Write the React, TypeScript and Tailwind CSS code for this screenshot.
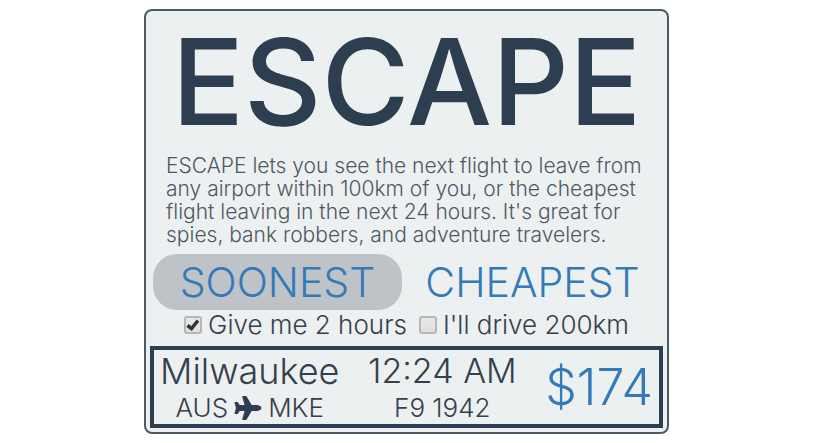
import { useState } from "react";
import { FaPlane } from "react-icons/fa";

const blurb = [
  "ESCAPE lets you see the next flight to leave from",
  "any airport within 100km of you, or the cheapest",
  "flight leaving in the next 24 hours. It's great for",
  "spies, bank robbers, and adventure travelers.",
];

function Option({ label, initial }: { label: string; initial: boolean }) {
  const [on, setOn] = useState(initial);
  return (
    <label className="flex items-center gap-1.5 whitespace-nowrap">
      <span className="grid">
        <input
          type="checkbox"
          checked={on}
          onChange={() => setOn(!on)}
          className="col-start-1 row-start-1 size-[18px] appearance-none rounded-[3px] border-2 border-[#b4b6b8] bg-linear-to-b from-[#e8e8e8] to-[#dedede]"
        />
        {on && (
          <svg viewBox="0 0 18 18" className="pointer-events-none col-start-1 row-start-1 size-[18px]" aria-hidden="true">
            <path d="M3.5 9.5 L7.5 12.5 L14 4.5" fill="none" stroke="#333" strokeWidth="3.5" />
          </svg>
        )}
      </span>
      {label}
    </label>
  );
}

export default function App() {
  return (
    <main className="min-h-screen bg-white px-4 py-[9px] font-['Inter',sans-serif] font-light text-[#34404c]">
      <section className="mx-auto w-full max-w-[525px] rounded-lg border-2 border-[#4d5963] bg-[#ecf0f1] p-1">
        <h1 className="text-center text-[120px] leading-[134px] font-medium text-[#2c3e50]">ESCAPE</h1>
        <p className="px-4 pt-[5px] text-[21px] leading-[23px] text-[#4d5963]">
          {blurb.map((line) => (
            <span key={line} className="block whitespace-nowrap">{line}</span>
          ))}
        </p>
        <div className="flex pt-2 text-[41px] leading-[56px] text-[#337ab7]">
          <button className="ml-[3px] w-[249px] rounded-3xl bg-[#bdc3c7]">SOONEST</button>
          <button className="flex-1">CHEAPEST</button>
        </div>
        <div className="flex justify-center gap-3 text-[26px] leading-[30px]">
          <Option label="Give me 2 hours" initial={true} />
          <Option label="I'll drive 200km" initial={false} />
        </div>
        <article className="mt-1.5 flex items-center justify-between border-4 border-[#2c3e50] px-1.5">
          <div className="text-center">
            <div className="text-[36px] leading-[42px]">Milwaukee</div>
            <div className="flex items-center justify-center gap-1.5 text-[26px] leading-[32px]">
              AUS <FaPlane className="h-6 w-7 shrink-0 text-[#2c3e50]" /> MKE
            </div>
          </div>
          <div className="text-center">
            <div className="text-[34px] leading-[42px]">12:24 AM</div>
            <div className="text-[26px] leading-[32px]">F9 1942</div>
          </div>
          <div className="text-[50px] leading-[56px] text-[#337ab7]">$174</div>
        </article>
      </section>
    </main>
  );
}
